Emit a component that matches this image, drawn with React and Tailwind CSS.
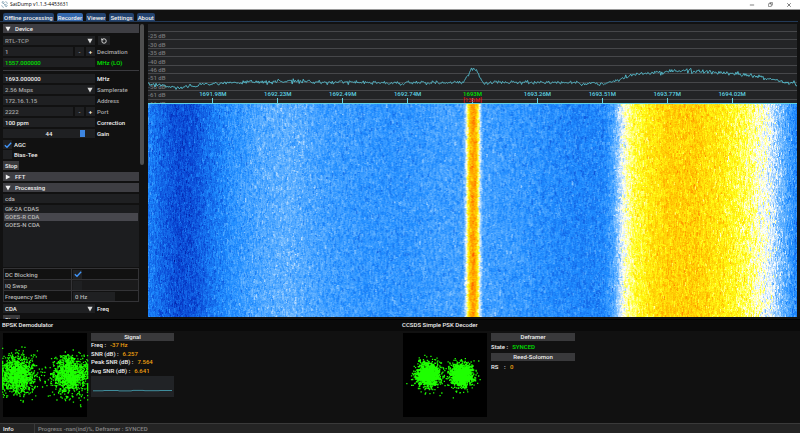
import React, { useEffect, useRef, useState } from 'react';
import { Minus, X, Copy, RotateCcw } from 'lucide-react';

const TABS = ['Offline processing', 'Recorder', 'Viewer', 'Settings', 'About'];
const DB_LABELS = ['-25 dB', '-30 dB', '-35 dB', '-40 dB', '-46 dB', '-51 dB', '-56 dB', '-61 dB', '-66 dB'];
const FREQS = ['1691.98M', '1692.23M', '1692.49M', '1692.74M', '1693M', '1693.26M', '1693.51M', '1693.77M', '1694.02M'];
const PIPELINES = ['GK-2A CDAS', 'GOES-R CDA', 'GOES-N CDA'];

// seeded so that every render gives the same noise
function makeRandom(seed) {
  let s = seed;
  return () => {
    s = (s + 0x6d2b79f5) | 0;
    let t = Math.imul(s ^ (s >>> 15), 1 | s);
    t = (t + Math.imul(t ^ (t >>> 7), 61 | t)) ^ t;
    return ((t ^ (t >>> 14)) >>> 0) / 4294967296;
  };
}

function gaussian(rand) {
  return Math.sqrt(-2 * Math.log(rand() + 1e-9)) * Math.cos(2 * Math.PI * rand());
}

function interpolate(stops, x) {
  if (x <= stops[0][0]) return stops[0][1];
  for (let i = 1; i < stops.length; i++) {
    if (x <= stops[i][0]) {
      const [x0, y0] = stops[i - 1];
      const [x1, y1] = stops[i];
      return y0 + ((y1 - y0) * (x - x0)) / (x1 - x0);
    }
  }
  return stops[stops.length - 1][1];
}

// signal level over the 648 bins
const LEVELS = [
  [0, 0.37], [15, 0.28], [30, 0.22], [45, 0.24], [60, 0.32], [80, 0.41], [110, 0.49], [140, 0.52],
  [170, 0.47], [210, 0.44], [250, 0.43], [290, 0.46], [314, 0.47], [317, 0.64], [319, 0.84], [321, 0.98],
  [324, 1.06], [327, 0.99], [329, 0.84], [331, 0.64], [334, 0.47], [370, 0.44], [400, 0.41], [430, 0.38],
  [455, 0.39], [464, 0.48], [470, 0.62], [476, 0.73], [485, 0.82], [500, 0.89], [520, 0.95], [545, 0.95],
  [575, 0.88], [600, 0.79], [620, 0.68], [635, 0.52], [648, 0.38],
];

const PALETTE = [
  [0, [0, 8, 140]], [0.2, [10, 70, 210]], [0.4, [30, 140, 255]], [0.55, [110, 184, 255]],
  [0.7, [255, 255, 255]], [0.85, [255, 255, 20]], [1, [255, 185, 0]], [1.2, [255, 80, 0]],
];
const CHANNELS = [0, 1, 2].map((c) => PALETTE.map(([v, rgb]) => [v, rgb[c]]));

function Waterfall() {
  const ref = useRef(null);

  useEffect(() => {
    const canvas = ref.current;
    const ctx = canvas.getContext('2d');
    const { width, height } = canvas;
    const image = ctx.createImageData(width, height);
    const rand = makeRandom(7);
    for (let x = 0; x < width; x++) {
      const level = interpolate(LEVELS, x);
      let noise = 0;
      let hold = 0;
      for (let y = 0; y < height; y++) {
        if (hold <= 0) {
          noise = gaussian(rand) * 0.045;
          hold = 1 + Math.floor(rand() * 4);
        }
        hold--;
        const v = level + noise + gaussian(rand) * 0.02;
        const i = (y * width + x) * 4;
        CHANNELS.forEach((stops, c) => {
          image.data[i + c] = interpolate(stops, v);
        });
        image.data[i + 3] = 255;
      }
    }
    ctx.putImageData(image, 0, 0);
  }, []);

  return <canvas ref={ref} width={648} height={213} className="block w-full flex-1 min-h-0" />;
}

const TRACE = [
  [0, 61], [20, 63], [38, 64], [56, 61], [92, 59], [142, 58], [192, 59], [260, 60], [314, 59], [318, 55],
  [322, 48], [325, 45], [329, 48], [332, 55], [335, 60], [352, 59], [412, 59], [452, 61], [464, 58],
  [477, 54], [490, 50], [522, 48], [552, 48], [582, 50], [612, 54], [637, 59], [648, 61],
];

function tracePath() {
  const rand = makeRandom(21);
  let d = '';
  for (let x = 0; x <= 648; x += 1) {
    const y = interpolate(TRACE, x) + gaussian(rand) * 1.1;
    d += `${x ? 'L' : 'M'}${x} ${y.toFixed(1)}`;
  }
  return d;
}

function Spectrum() {
  return (
    <div className="relative h-[80px] shrink-0 overflow-hidden border-b border-[#5fd3e4] bg-[#232426]">
      <div className="mt-[7px] grid h-[76px] grid-rows-9">
        {DB_LABELS.map((label) => (
          <div key={label} className="flex items-center border-t border-[#46474a] leading-[7px] text-[#77787a]">
            {label}
          </div>
        ))}
      </div>
      <svg viewBox="0 0 648 80" preserveAspectRatio="none" className="absolute inset-0 h-full w-full">
        <path d={tracePath()} fill="none" stroke="#55bccd" strokeWidth="0.9" />
      </svg>
      <div className="absolute inset-x-0 bottom-0 flex px-[5%]">
        {FREQS.map((freq) => (
          <div key={freq} className="relative flex flex-1 flex-col items-center">
            <span className={freq === '1693M' ? 'text-[#00e000]' : 'text-[#5fd3e4]'}>{freq}</span>
            <span className="h-[5px] w-px bg-[#5fd3e4]" />
            {freq === '1693M' && <span className="absolute top-[6px] text-[#e01010]">[136M]</span>}
          </div>
        ))}
      </div>
    </div>
  );
}

function cloudPath(seed, centers, spread, count) {
  const rand = makeRandom(seed);
  let d = '';
  centers.forEach((cx) => {
    for (let i = 0; i < count; i++) {
      const x = Math.min(84, Math.max(-1, cx + gaussian(rand) * spread));
      const y = 42 + gaussian(rand) * spread;
      d += `M${x.toFixed(1)} ${y.toFixed(1)}h1.3`;
    }
  });
  return d;
}

function Constellation({ seed, centers, spread, count }) {
  return (
    <svg viewBox="0 0 84 84" className="h-[84px] w-[84px] shrink-0 overflow-visible bg-black">
      <path d={cloudPath(seed, centers, spread, count)} stroke="#1eff00" strokeWidth="1.3" fill="none" />
    </svg>
  );
}

function Arrow({ open = true }) {
  return (
    <svg viewBox="0 0 6 6" className="h-[6px] w-[6px] shrink-0" fill="currentColor">
      <path d={open ? 'M0.4 0.8h5.2L3 5.4z' : 'M0.8 0.4v5.2L5.4 3z'} />
    </svg>
  );
}

function Header({ title, open }) {
  return (
    <button type="button" aria-expanded={open} className="flex h-[9px] w-full shrink-0 items-center gap-1 bg-[#3e3e43] px-0.5 text-left">
      <Arrow open={open} />
      {title}
    </button>
  );
}

const FIELD = 'h-[9px] bg-[#1f2022] px-0.5 outline-none';

function Row({ id, label, className, children }) {
  return (
    <div className={`flex h-[9px] shrink-0 items-center gap-0.5 ${className || ''}`}>
      <div className="flex w-[92px] shrink-0 gap-0.5">{children}</div>
      <label htmlFor={id}>{label}</label>
    </div>
  );
}

function SelectField({ id, options, label }) {
  return (
    <div className="grid w-full items-center">
      <select id={id} aria-label={label} className={`${FIELD} col-start-1 row-start-1 w-full appearance-none`}>
        {options.map((o) => (
          <option key={o}>{o}</option>
        ))}
      </select>
      <span className="pointer-events-none col-start-1 row-start-1 justify-self-end pr-0.5 text-[#d8d8d8]">
        <Arrow />
      </span>
    </div>
  );
}

function Stepper({ id, value }) {
  return (
    <>
      <input id={id} defaultValue={value} className={`${FIELD} min-w-0 flex-1`} />
      <button type="button" aria-label="Decrease" className="h-[9px] w-[9px] bg-[#1f2022]">-</button>
      <button type="button" aria-label="Increase" className="h-[9px] w-[9px] bg-[#1f2022] text-white">+</button>
    </>
  );
}

function Check({ id, checked = false }) {
  const [on, setOn] = useState(checked);
  return (
    <span className="grid h-[9px] w-[9px] shrink-0 place-items-center bg-[#1f2022]">
      <input
        id={id}
        type="checkbox"
        checked={on}
        onChange={() => setOn(!on)}
        className="col-start-1 row-start-1 h-[9px] w-[9px] appearance-none"
      />
      {on && (
        <svg viewBox="0 0 8 8" className="pointer-events-none col-start-1 row-start-1 h-2 w-2">
          <path d="M0.8 4.2L3 6.3L7.2 1.8" fill="none" stroke="#4296fa" strokeWidth="1.3" />
        </svg>
      )}
    </span>
  );
}

function Sidebar() {
  const [selected, setSelected] = useState('GOES-R CDA');

  return (
    <aside className="flex w-[148px] shrink-0 gap-px overflow-hidden pl-[3px]">
      <div className="flex w-[136px] shrink-0 flex-col gap-0.5">
        <Header title="Device" open />
        <div className="mt-px flex h-[9px] shrink-0 gap-[3px] text-[#9a9a9a]">
          <div className="w-[92px]">
            <SelectField label="Source" options={['RTL-TCP']} />
          </div>
          <button type="button" aria-label="Refresh sources" className="flex h-[9px] w-3 items-center justify-center bg-[#1f2022] text-white">
            <RotateCcw className="h-[6px] w-[6px]" strokeWidth={3} />
          </button>
        </div>
        <Row id="decimation" label="Decimation" className="text-[#a8a8a8]">
          <Stepper id="decimation" value="1" />
        </Row>
        <Row id="lo" label="MHz (LO)" className="text-[#00e000]">
          <input id="lo" defaultValue="1557.000000" className={`${FIELD} w-full`} />
        </Row>
        <hr className="my-px border-[#3a3a3e]" />
        <Row id="freq" label="MHz">
          <input id="freq" defaultValue="1693.000000" className={`${FIELD} w-full`} />
        </Row>
        <Row id="rate" label="Samplerate" className="text-[#a8a8a8]">
          <SelectField id="rate" options={['2.56 Msps']} />
        </Row>
        <Row id="address" label="Address" className="text-[#a8a8a8]">
          <input id="address" defaultValue="172.16.1.15" className={`${FIELD} w-full`} />
        </Row>
        <Row id="port" label="Port" className="text-[#a8a8a8]">
          <Stepper id="port" value="2222" />
        </Row>
        <Row id="correction" label="Correction">
          <input id="correction" defaultValue="100 ppm" className={`${FIELD} w-full`} />
        </Row>
        <Row id="gain" label="Gain">
          <div className="grid h-[9px] w-full place-items-center bg-[#1f2022]">
            <input
              id="gain"
              type="range"
              min="0"
              max="49"
              defaultValue="44"
              className="col-start-1 row-start-1 h-[9px] w-full appearance-none bg-transparent px-px [&::-webkit-slider-thumb]:h-[7px] [&::-webkit-slider-thumb]:w-[5px] [&::-webkit-slider-thumb]:appearance-none [&::-webkit-slider-thumb]:bg-[#3d85e0]"
            />
            <span className="pointer-events-none col-start-1 row-start-1">44</span>
          </div>
        </Row>
        <div className="flex shrink-0 flex-col gap-px">
          <div className="flex items-center gap-0.5">
            <Check id="agc" checked />
            <label htmlFor="agc">AGC</label>
          </div>
          <div className="flex items-center gap-0.5">
            <Check id="bias" />
            <label htmlFor="bias">Bias-Tee</label>
          </div>
        </div>
        <button type="button" className="h-[9px] shrink-0 self-start bg-[#3a3a3c] px-0.5">Stop</button>
        <Header title="FFT" open={false} />
        <Header title="Processing" open />
        <input aria-label="Search pipelines" defaultValue="cda" className={`${FIELD} w-full shrink-0 text-[#b8b8b8]`} />
        <div className="flex h-[62px] shrink-0 flex-col bg-[#1c1d1f] px-px text-[#b8b8b8]">
          {PIPELINES.map((name) => (
            <button
              key={name}
              type="button"
              onClick={() => setSelected(name)}
              className={`h-2 px-px text-left leading-[8px] ${name === selected ? 'bg-[#47474d]' : ''}`}
            >
              {name}
            </button>
          ))}
        </div>
        <table className="-mt-px w-full shrink-0 border-collapse text-[#b8b8b8]">
          <tbody>
            <tr className="h-[11px] border border-[#333336]">
              <td className="w-[68px] border-r border-[#333336] px-px"><label htmlFor="dc">DC Blocking</label></td>
              <td className="pl-px"><Check id="dc" checked /></td>
            </tr>
            <tr className="h-[11px] border border-[#333336] bg-[#1a1a1b]">
              <td className="border-r border-[#333336] px-px"><label htmlFor="iq">IQ Swap</label></td>
              <td className="pl-px"><Check id="iq" /></td>
            </tr>
            <tr className="h-[11px] border border-[#333336]">
              <td className="border-r border-[#333336] px-px"><label htmlFor="shift">Frequency Shift</label></td>
              <td className="pl-px">
                <input id="shift" defaultValue="0 Hz" className={`${FIELD} block w-[42px]`} />
              </td>
            </tr>
          </tbody>
        </table>
        <Row id="preset" label="Freq">
          <SelectField id="preset" options={['CDA']} />
        </Row>
        <button type="button" className="h-[9px] shrink-0 self-start bg-[#3a3a3c] px-0.5">Start</button>
      </div>
      <div className="h-[141px] w-1 rounded-full bg-[#4f4f4f]" />
    </aside>
  );
}

function PanelTitle({ children }) {
  return <h2 className="h-[11px] bg-[#0a0a0a] px-0.5 leading-[10px]">{children}</h2>;
}

function BarTitle({ children }) {
  return <h3 className="h-2 bg-[#39393b] text-center leading-[8px]">{children}</h3>;
}

function Stat({ label, value }) {
  return (
    <p className="flex items-center gap-1 leading-[8px]">
      <span>{label}</span>
      <span className="text-[#f0a010]">{value}</span>
    </p>
  );
}

function App() {
  const [activeTab, setActiveTab] = useState('Recorder');

  return (
    <div className="flex h-screen flex-col overflow-hidden bg-[#111111] font-['Roboto',sans-serif] text-[6px] leading-[9px] font-medium text-[#f0f0f0]">
      {/* Window title bar */}
      <header className="flex h-[10px] shrink-0 items-center justify-between border-b border-[#9a9a9a] bg-white px-px font-['Open_Sans',sans-serif] text-[5px] font-normal text-black">
        <div className="flex items-center gap-0.5">
          <svg viewBox="0 0 8 8" className="h-[7px] w-[7px]" fill="none" stroke="#6f93a8" strokeWidth="0.8">
            <path d="M1 1.2l1.6-0.6 1.2 1.6-1.4 1zM4.4 4.8l1.4-1 1.4 1.8-1.4 1.2zM2.8 2.8l2 2M5 0.8c1.4 0.2 2.2 1 2.3 2.4M0.8 4.8c0.2 1.4 1 2.3 2.4 2.5" />
          </svg>
          <span>SatDump v1.1.3-4453631</span>
        </div>
        <div className="flex gap-[13px] pr-[7px]">
          <button type="button" aria-label="Minimize"><Minus className="h-[6px] w-[6px]" /></button>
          <button type="button" aria-label="Restore"><Copy className="h-[5px] w-[5px] -scale-x-100" strokeWidth={2} /></button>
          <button type="button" aria-label="Close"><X className="h-[6px] w-[6px]" /></button>
        </div>
      </header>

      {/* Tabs */}
      <nav className="mr-0.5 flex shrink-0 gap-[3px] border-b border-[#233a58] pt-[3px] pl-[3px]">
        {TABS.map((tab) => (
          <button
            key={tab}
            type="button"
            onClick={() => setActiveTab(tab)}
            className={`h-2 rounded-t-xs px-px leading-[9px] ${activeTab === tab ? 'bg-[#3468ad]' : 'bg-[#23436f]'}`}
          >
            {tab}
          </button>
        ))}
      </nav>

      <main className="flex min-h-0 flex-1 pt-0.5">
        <Sidebar />
        <section className="mr-[3px] flex min-w-0 flex-1 flex-col pb-0.5">
          <Spectrum />
          <Waterfall />
        </section>
      </main>

      {/* Demodulator and decoder modules */}
      <div className="grid h-[104px] shrink-0 grid-cols-2 border-t border-black">
        <section>
          <PanelTitle>BPSK Demodulator</PanelTitle>
          <div className="flex gap-1 px-[3px] pt-0.5">
            <Constellation seed={3} centers={[14, 67]} spread={9} count={1200} />
            <div className="w-[83px]">
              <BarTitle>Signal</BarTitle>
              <div className="mb-px grid h-[34px] grid-rows-4">
                <Stat label="Freq :" value="-37 Hz" />
                <Stat label="SNR (dB) :" value="6.257" />
                <Stat label="Peak SNR (dB) :" value="7.564" />
                <Stat label="Avg SNR (dB) :" value="6.641" />
              </div>
              <svg viewBox="0 0 83 21" className="block h-[21px] w-full bg-[#212326]">
                <path d="M2 14.8h10l1-0.3h14l1 0.4h12l2-0.5h10l2 0.3h14l1-0.2h12" fill="none" stroke="#3f8d9c" strokeWidth="1" />
              </svg>
            </div>
          </div>
        </section>
        <section>
          <PanelTitle>CCSDS Simple PSK Decoder</PanelTitle>
          <div className="flex gap-1 px-[3px] pt-0.5">
            <Constellation seed={11} centers={[24, 58]} spread={6} count={1200} />
            <div className="w-[84px]">
              <BarTitle>Deframer</BarTitle>
              <p className="mb-0.5 flex h-[10px] items-center gap-1">
                <span>State :</span>
                <span className="text-[#00e000]">SYNCED</span>
              </p>
              <BarTitle>Reed-Solomon</BarTitle>
              <p className="flex h-[10px] items-center">
                <span className="w-[13px]">RS</span>
                <span className="w-[6px]">:</span>
                <span className="text-[#f0a010]">0</span>
              </p>
            </div>
          </div>
        </section>
      </div>

      {/* Status bar */}
      <footer className="flex h-[10px] shrink-0 items-center border-t border-[#3a3a3a] bg-[#242424]">
        <span className="w-[35px] border-r border-[#3a3a3a] pl-[3px]">Info</span>
        <span className="pl-[3px] text-[#858585]">Progress -nan(ind)%, Deframer : SYNCED</span>
      </footer>
    </div>
  );
}

export default App;
